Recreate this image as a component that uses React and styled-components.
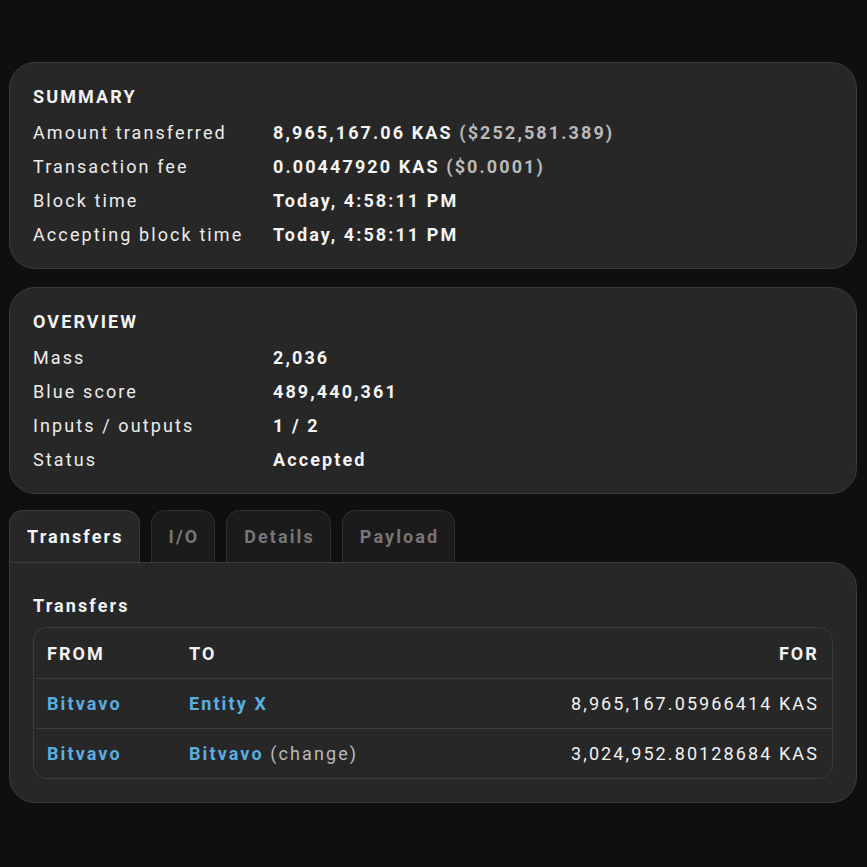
import React from 'react';
import styled, { createGlobalStyle } from 'styled-components';

const GlobalStyle = createGlobalStyle`
  html, body {
    margin: 0;
    padding: 0;
    background: #0f0f0f;
  }
  body {
    font-family: Roboto, "Liberation Sans", sans-serif;
    color: #f2f2f2;
  }
`;

const Page = styled.div`
  display: flex;
  flex-direction: column;
  gap: 18px;
  padding: 62px 10px 40px 9px;
  width: 848px;
`;

const Card = styled.section`
  background: #272727;
  border: 1px solid #3b3b3b;
  border-radius: 26px;
  padding: 17px 23px 16px;
`;

const CardTitle = styled.h2`
  margin: 0 0 2px;
  font-size: 18px;
  line-height: 34px;
  font-weight: 700;
  letter-spacing: 2.1px;
  text-transform: uppercase;
`;

const Row = styled.div`
  display: grid;
  grid-template-columns: 240px 1fr;
  font-size: 18px;
  line-height: 34px;
  letter-spacing: 2.1px;
`;

const Label = styled.span`
  color: #ececec;
`;

const Value = styled.span`
  font-weight: 700;
  color: #f4f4f4;
`;

const Muted = styled.span`
  color: #bababa;
  font-weight: ${(p) => (p.$bold ? 700 : 400)};
`;

const TabsBlock = styled.div`
  display: flex;
  flex-direction: column;
  margin-top: -2px;
`;

const TabBar = styled.div`
  display: flex;
  gap: 11px;
`;

const Tab = styled.button`
  font-family: Roboto, "Liberation Sans", sans-serif;
  font-size: 18px;
  font-weight: 700;
  letter-spacing: 2.1px;
  height: 52px;
  padding: 0 15px 0 17px;
  border: 1px solid ${(p) => (p.$active ? '#3b3b3b' : '#2e2e2e')};
  border-bottom: none;
  border-radius: 14px 14px 0 0;
  background: ${(p) => (p.$active ? '#272727' : '#1b1b1b')};
  color: ${(p) => (p.$active ? '#f4f4f4' : '#767676')};
  margin-bottom: ${(p) => (p.$active ? '-1px' : '0')};
  position: relative;
  z-index: ${(p) => (p.$active ? 1 : 0)};
  cursor: pointer;
`;

const Panel = styled.div`
  background: #272727;
  border: 1px solid #3b3b3b;
  border-radius: 0 26px 26px 26px;
  padding: 26px 23px 23px;
`;

const PanelTitle = styled.h3`
  margin: 0 0 4px;
  font-size: 18px;
  line-height: 34px;
  font-weight: 700;
  letter-spacing: 2.1px;
`;

const Table = styled.div`
  border: 1px solid #3b3b3b;
  border-radius: 14px;
  overflow: hidden;
`;

const TRow = styled.div`
  display: grid;
  grid-template-columns: 142px 1fr auto;
  align-items: center;
  height: ${(p) => (p.$head ? '50px' : '49px')};
  padding: 0 13px;
  font-size: 18px;
  letter-spacing: 2.1px;
  border-top: ${(p) => (p.$first ? 'none' : '1px solid #3b3b3b')};
  font-weight: ${(p) => (p.$head ? 700 : 400)};
  text-transform: ${(p) => (p.$head ? 'uppercase' : 'none')};
`;

const Right = styled.span`
  text-align: right;
`;

const EntityLink = styled.a`
  color: #5aaee0;
  font-weight: 700;
  text-decoration: none;
`;

const summary = [
  ['Amount transferred', <><Value>8,965,167.06 KAS</Value> <Muted $bold>($252,581.389)</Muted></>],
  ['Transaction fee', <><Value>0.00447920 KAS</Value> <Muted $bold>($0.0001)</Muted></>],
  ['Block time', <Value>Today, 4:58:11 PM</Value>],
  ['Accepting block time', <Value>Today, 4:58:11 PM</Value>],
];

const overview = [
  ['Mass', '2,036'],
  ['Blue score', '489,440,361'],
  ['Inputs / outputs', '1 / 2'],
  ['Status', 'Accepted'],
];

const transfers = [
  { from: 'Bitvavo', to: 'Entity X', note: null, amount: '8,965,167.05966414 KAS' },
  { from: 'Bitvavo', to: 'Bitvavo', note: '(change)', amount: '3,024,952.80128684 KAS' },
];

const tabs = ['Transfers', 'I/O', 'Details', 'Payload'];

export default function App() {
  return (
    <>
      <GlobalStyle />
      <Page>
        <Card>
          <CardTitle>Summary</CardTitle>
          {summary.map(([label, value]) => (
            <Row key={label}>
              <Label>{label}</Label>
              <span>{value}</span>
            </Row>
          ))}
        </Card>

        <Card>
          <CardTitle>Overview</CardTitle>
          {overview.map(([label, value]) => (
            <Row key={label}>
              <Label>{label}</Label>
              <Value>{value}</Value>
            </Row>
          ))}
        </Card>

        <TabsBlock>
          <TabBar>
            {tabs.map((t, i) => (
              <Tab key={t} $active={i === 0}>{t}</Tab>
            ))}
          </TabBar>
          <Panel>
            <PanelTitle>Transfers</PanelTitle>
            <Table>
              <TRow $head $first>
                <span>From</span>
                <span>To</span>
                <Right>For</Right>
              </TRow>
              {transfers.map((t, i) => (
                <TRow key={i}>
                  <span><EntityLink href="#">{t.from}</EntityLink></span>
                  <span>
                    <EntityLink href="#">{t.to}</EntityLink>
                    {t.note && <Muted> {t.note}</Muted>}
                  </span>
                  <Right>{t.amount}</Right>
                </TRow>
              ))}
            </Table>
          </Panel>
        </TabsBlock>
      </Page>
    </>
  );
}
